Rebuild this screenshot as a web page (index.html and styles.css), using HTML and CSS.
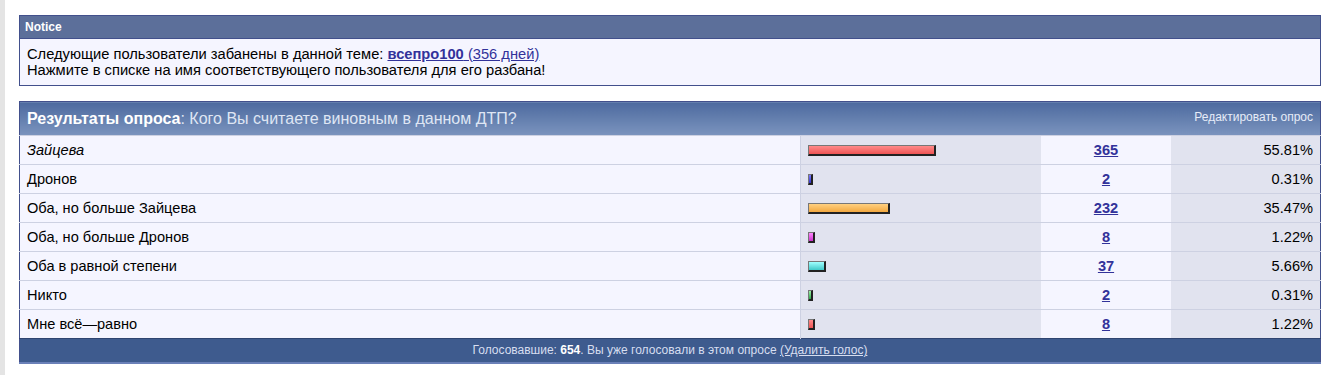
FILE: index.html
```html
<html>

<head>
    <link rel="stylesheet" href="styles.css">
    <title>Poll</title>
</head>

<body>
    <div id="page">
        <div class="notice">
            <div class="notice-title">Notice</div>
            <div class="notice-body">
                Следующие пользователи забанены в данной теме: <a href="#"><b>всепро100</b> (356 дней)</a><br>
                Нажмите в списке на имя соответствующего пользователя для его разбана!
            </div>
        </div>

        <table class="poll">
            <tr class="poll-head">
                <th colspan="3" class="q"><b>Результаты опроса</b>: Кого Вы считаете виновным в данном ДТП?</th>
                <th class="edit"><a href="#">Редактировать опрос</a></th>
            </tr>
            <tr>
                <td class="opt"><i>Зайцева</i></td>
                <td class="bar"><span class="b red" style="width: 128px"></span></td>
                <td class="num"><a href="#">365</a></td>
                <td class="pct">55.81%</td>
            </tr>
            <tr>
                <td class="opt">Дронов</td>
                <td class="bar"><span class="b blue" style="width: 5px"></span></td>
                <td class="num"><a href="#">2</a></td>
                <td class="pct">0.31%</td>
            </tr>
            <tr>
                <td class="opt">Оба, но больше Зайцева</td>
                <td class="bar"><span class="b orange" style="width: 82px"></span></td>
                <td class="num"><a href="#">232</a></td>
                <td class="pct">35.47%</td>
            </tr>
            <tr>
                <td class="opt">Оба, но больше Дронов</td>
                <td class="bar"><span class="b pink" style="width: 7px"></span></td>
                <td class="num"><a href="#">8</a></td>
                <td class="pct">1.22%</td>
            </tr>
            <tr>
                <td class="opt">Оба в равной степени</td>
                <td class="bar"><span class="b cyan" style="width: 18px"></span></td>
                <td class="num"><a href="#">37</a></td>
                <td class="pct">5.66%</td>
            </tr>
            <tr>
                <td class="opt">Никто</td>
                <td class="bar"><span class="b green" style="width: 5px"></span></td>
                <td class="num"><a href="#">2</a></td>
                <td class="pct">0.31%</td>
            </tr>
            <tr>
                <td class="opt">Мне всё—равно</td>
                <td class="bar"><span class="b red" style="width: 7px"></span></td>
                <td class="num"><a href="#">8</a></td>
                <td class="pct">1.22%</td>
            </tr>
            <tr class="poll-foot">
                <td colspan="4">Голосовавшие: <b>654</b>. Вы уже голосовали в этом опросе <a href="#">(Удалить голос)</a></td>
            </tr>
        </table>
    </div>
</body>

</html>
```

FILE: styles.css
```css
body {
    margin: 0;
    padding: 0;
    background: #fff;
    font-family: "Liberation Sans", Arial, sans-serif;
    color: #000;
}

#page {
    border-left: 5px solid #e4e4e4;
    padding: 15px 4px 10px 14px;
    min-height: 350px;
}

a {
    color: #32329a;
}

.notice {
    border: 1px solid #42508c;
    background: #f5f5ff;
}

.notice-title {
    height: 22px;
    line-height: 22px;
    background: #5c6f9a;
    color: #fff;
    font-size: 12px;
    font-weight: bold;
    padding: 0 5px;
    border-bottom: 1px solid #42508c;
}

.notice-body {
    padding: 7px 7px 7px 7px;
    font-size: 14.7px;
    line-height: 16px;
}

.poll {
    margin-top: 15px;
    width: 100%;
    border-collapse: collapse;
    border: 1px solid #42508c;
    font-size: 14.6px;
}

.poll td {
    height: 29px;
    padding: 0 7px;
    border-top: 1px solid #cdd1e2;
}

.poll-head th {
    height: 34px;
    background: linear-gradient(#4d6a9f, #7b94be);
    color: #dfe6f4;
    font-weight: normal;
    text-align: left;
    padding: 0 7px;
}

.poll-head .q {
    font-size: 16px;
}

.poll-head .q b {
    color: #fff;
}

.poll-head .edit {
    text-align: right;
    font-size: 12px;
    padding-bottom: 3px;
}

.poll-head .edit a {
    color: #e6ecf8;
    text-decoration: none;
}

.opt {
    background: #f5f5ff;
    width: 766px;
    border-right: 1px solid #cdd1e2;
}

.bar {
    background: #e1e3ef;
    width: 226px;
}

.num {
    background: #f5f5ff;
    text-align: center;
    width: 116px;
    font-weight: bold;
}

.pct {
    background: #e1e3ef;
    text-align: right;
}

.b {
    display: block;
    border: 1px solid #222;
    border-top-color: #777;
    border-left-color: #777;
    border-right-width: 2px;
    border-bottom-width: 2px;
    box-sizing: border-box;
    height: 11px;
    margin-top: 1px;
}

.red { background: linear-gradient(#ff8a8a, #ee5555); }
.blue { background: linear-gradient(#7a7aff, #3535c8); }
.orange { background: linear-gradient(#ffd080, #f2a840); }
.pink { background: linear-gradient(#ff88ff, #cc33cc); }
.cyan { background: linear-gradient(#a0ffff, #40c8c8); }
.green { background: linear-gradient(#9cf0a8, #2fa84a); }

.poll-foot td {
    height: 24px;
    background: #3e5b8e;
    color: #d7def0;
    font-size: 12px;
    text-align: center;
    border-top: 1px solid #2f4470;
    border-bottom: 2px solid #6a80b8;
}

.poll-foot b {
    color: #fff;
}

.poll-foot a {
    color: #d7def0;
}
```
